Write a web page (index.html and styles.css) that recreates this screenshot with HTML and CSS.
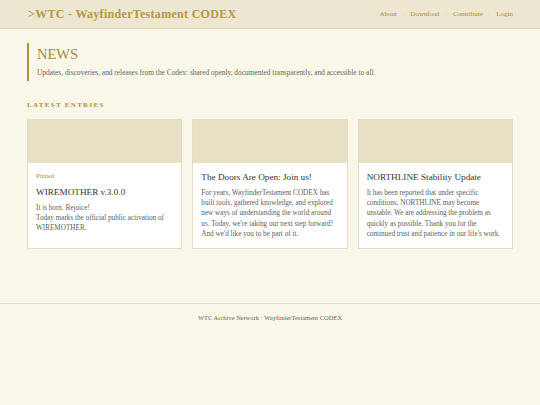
FILE: index.html
```html
<!DOCTYPE html>
<html lang="en">
<head>
  <meta charset="UTF-8" />
  <meta name="viewport" content="width=device-width, initial-scale=1.0">
  <title>WTC - News</title>
  <link rel="stylesheet" href="styles.css">
</head>
<body>
  <header class="topbar">
    <div class="brand">&gt;WTC - WayfinderTestament CODEX</div>
    <nav class="nav">
      <a href="#">About</a>
      <span class="sep">|</span>
      <a href="#">Download</a>
      <span class="sep">|</span>
      <a href="#">Contribute</a>
      <span class="sep">|</span>
      <a href="#">Login</a>
    </nav>
  </header>

  <main class="page">
    <section class="intro">
      <h1>NEWS</h1>
      <p>Updates, discoveries, and releases from the Codex: shared openly, documented transparently, and accessible to all.</p>
    </section>

    <h2 class="section-title">LATEST ENTRIES</h2>

    <div class="cards">
      <article class="card">
        <div class="card-img"></div>
        <div class="card-body">
          <div class="tag">Pinned</div>
          <h3>WIREMOTHER v.3.0.0</h3>
          <p>It is born. Rejoice!<br>Today marks the official public activation of WIREMOTHER.</p>
        </div>
      </article>

      <article class="card">
        <div class="card-img"></div>
        <div class="card-body">
          <h3>The Doors Are Open: Join us!</h3>
          <p>For years, WayfinderTestament CODEX has built tools, gathered knowledge, and explored new ways of understanding the world around us. Today, we're taking our next step forward! And we'd like you to be part of it.</p>
        </div>
      </article>

      <article class="card">
        <div class="card-img"></div>
        <div class="card-body">
          <h3>NORTHLINE Stability Update</h3>
          <p>It has been reported that under specific conditions, NORTHLINE may become unstable. We are addressing the problem as quickly as possible. Thank you for the continued trust and patience in our life's work.</p>
        </div>
      </article>
    </div>
  </main>

  <footer class="footer">
    WTC Archive Network · WayfinderTestament CODEX
  </footer>
</body>
</html>
```

FILE: styles.css
```css
body {
  margin: 0;
  font-family: "Liberation Serif", "DejaVu Serif", serif;
  background: #f9f6ea;
  color: #444;
  min-height: 405px;
  display: flex;
  flex-direction: column;
}
.topbar {
  display: flex;
  justify-content: space-between;
  align-items: center;
  height: 28px;
  padding: 0 27px 0 28px;
  background: #ede7d1;
  border-bottom: 1px solid #e0d6b8;
}
.brand {
  font-size: 12px;
  font-weight: bold;
  letter-spacing: 0.3px;
  color: #b8963f;
}
.nav {
  display: flex;
  align-items: center;
  gap: 6px;
  font-size: 7px;
}
.nav a {
  color: #a98838;
  text-decoration: none;
}
.nav .sep {
  color: #d8ccaa;
}
.page {
  padding: 14px 27px 0;
  flex-grow: 1;
}
.intro {
  border-left: 2px solid #b0913f;
  padding: 1px 0 3px 8px;
}
.intro h1 {
  margin: 0;
  font-size: 14.5px;
  font-weight: normal;
  color: #a8893a;
  line-height: 20px;
}
.intro p {
  margin: 4px 0 0;
  font-size: 7.4px;
  color: #666;
  line-height: 10px;
}
.section-title {
  margin: 20px 0 10px;
  font-size: 7px;
  letter-spacing: 1.3px;
  color: #b08d3a;
}
.cards {
  display: grid;
  grid-template-columns: repeat(3, 1fr);
  gap: 10px;
}
.card {
  background: #fff;
  border: 1px solid #e3dbc2;
}
.card-img {
  height: 43px;
  background: #e8e0c5;
}
.card-body {
  padding: 9px 8px 9px;
}
.tag {
  font-size: 6.5px;
  color: #b08d3a;
  margin: 0 0 8px;
}
.card h3 {
  margin: 0 0 6px;
  font-size: 9.2px;
  font-weight: normal;
  color: #333;
}
.card p {
  margin: 0;
  font-size: 7.2px;
  line-height: 10.2px;
  color: #5e5e5e;
}
.footer {
  margin-top: 45px;
  border-top: 1px solid #e3dbc2;
  padding: 10px 0 84px;
  text-align: center;
  font-size: 6.5px;
  color: #666;
}
```
